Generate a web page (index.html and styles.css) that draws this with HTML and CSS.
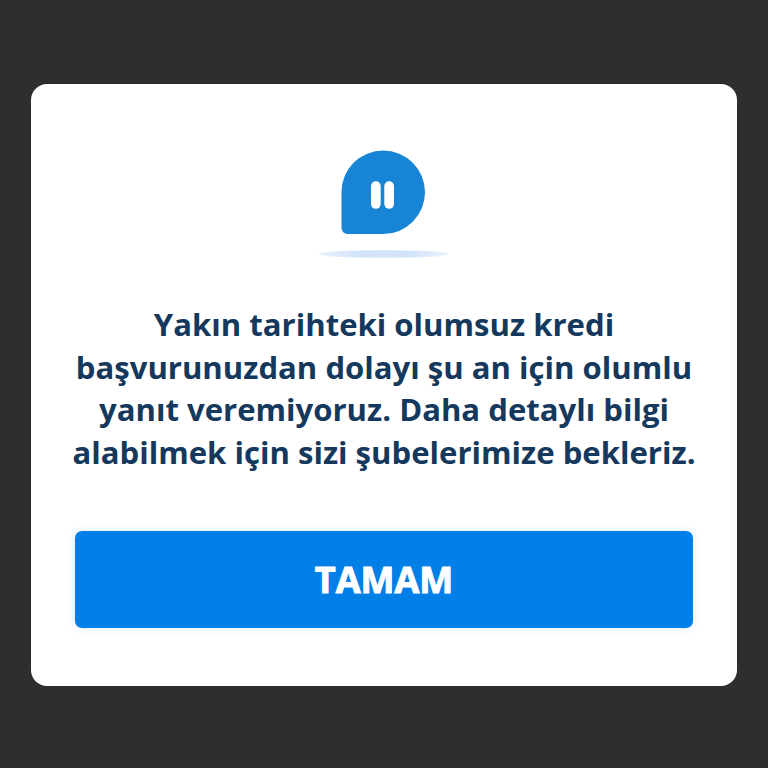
FILE: index.html
```html
<!DOCTYPE html>
<html lang="tr">
<head>
  <meta charset="UTF-8">
  <title>Kredi Başvurusu</title>
  <link rel="stylesheet" href="styles.css">
</head>
<body>
  <div class="modal">
    <svg class="modal-icon" width="132" height="110" viewBox="0 0 132 110">
      <defs>
        <linearGradient id="shadow">
          <stop offset="0" stop-color="#e8f1fc"/>
          <stop offset="0.3" stop-color="#d3e4f9"/>
          <stop offset="0.7" stop-color="#d3e4f9"/>
          <stop offset="1" stop-color="#e8f1fc"/>
        </linearGradient>
      </defs>
      <ellipse cx="65.500" cy="104" rx="65" ry="3.800" fill="url(#shadow)"/>
      <path d="M65.200 0.500a41.800 41.800 0 0 1 0 83.600H29.500a6 6 0 0 1-6-6V42A41.600 41.600 0 0 1 65.200 0.500Z" fill="#1784d5"/>
      <rect x="53" y="31.300" width="9.700" height="27.500" rx="4.850" fill="#fff"/>
      <rect x="66.300" y="31.300" width="9.700" height="27.500" rx="4.850" fill="#fff"/>
    </svg>
    <div class="message">
      Yakın tarihteki olumsuz kredi<br>
      başvurunuzdan dolayı şu an için olumlu<br>
      yanıt veremiyoruz. Daha detaylı bilgi<br>
      alabilmek için sizi şubelerimize bekleriz.
    </div>
    <button class="button">TAMAM</button>
  </div>
</body>
</html>
```

FILE: styles.css
```css
body {
  margin: 0;
  height: 768px;
  background-color: #2e2e2e;
  font-family: "Open Sans", sans-serif;
  overflow: hidden;
}

.modal {
  display: flex;
  flex-direction: column;
  align-items: center;
  box-sizing: border-box;
  width: 706px;
  height: 602px;
  margin: 83.5px 0 0 31px;
  padding: 66.5px 43px 57.5px;
  background: white;
  border-radius: 16px;
}

.modal-icon {
  display: block;
}

.message {
  margin-top: 43px;
  color: #15385d;
  font-size: 31.1px;
  font-weight: bold;
  line-height: 42.7px;
  text-align: center;
  white-space: nowrap;
}

.button {
  width: 618.5px;
  height: 97px;
  margin-top: auto;
  padding: 0 0 1px;
  border: none;
  border-radius: 7px;
  background: #007fe7;
  box-shadow: 0 0 10px rgba(0, 127, 232, 0.15);
  color: white;
  font-family: inherit;
  font-size: 36px;
  font-weight: bold;
  -webkit-text-stroke: 1px white;
  cursor: pointer;
}
```
